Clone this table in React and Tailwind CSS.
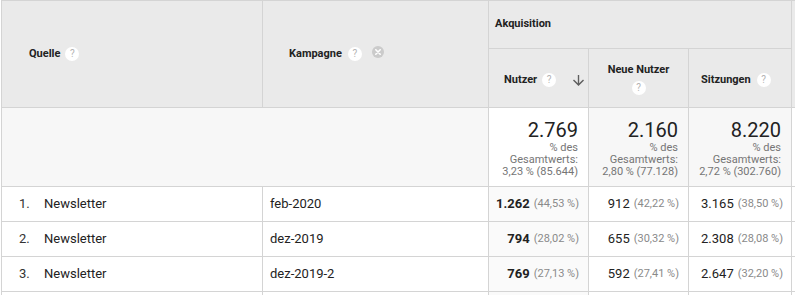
import React from "react";

const Help = () => (
  <span className="inline-flex items-center justify-center w-[14px] h-[14px] rounded-full bg-white text-[10px] leading-none text-[#b3b3b3] font-normal shrink-0">
    ?
  </span>
);

const ClearIcon = () => (
  <svg width="12" height="12" viewBox="0 0 12 12" className="shrink-0">
    <circle cx="6" cy="6" r="6" fill="#cbcbcb" />
    <path d="M3.8 3.8 L8.2 8.2 M8.2 3.8 L3.8 8.2" stroke="#fff" strokeWidth="1.6" strokeLinecap="round" />
  </svg>
);

const SortArrow = () => (
  <svg width="11" height="11" viewBox="4 4 16 16" className="shrink-0">
    <path d="M20 12l-1.41-1.41L13 16.17V4h-2v12.17l-5.58-5.59L4 12l8 8 8-8z" fill="#5f5f5f" />
  </svg>
);

const totals = [
  { value: "2.769", share: "3,23 % (85.644)", sorted: true },
  { value: "2.160", share: "2,80 % (77.128)" },
  { value: "8.220", share: "2,72 % (302.760)" },
];

const rows = [
  { n: "1.", source: "Newsletter", campaign: "feb-2020", users: "1.262", usersP: "(44,53 %)", newUsers: "912", newP: "(42,22 %)", sessions: "3.165", sessP: "(38,50 %)" },
  { n: "2.", source: "Newsletter", campaign: "dez-2019", users: "794", usersP: "(28,02 %)", newUsers: "655", newP: "(30,32 %)", sessions: "2.308", sessP: "(28,08 %)" },
  { n: "3.", source: "Newsletter", campaign: "dez-2019-2", users: "769", usersP: "(27,13 %)", newUsers: "592", newP: "(27,41 %)", sessions: "2.647", sessP: "(32,20 %)" },
];

const cell = "border-r border-b border-[#d4d4d4]";

export default function App() {
  return (
    <div className="w-[795px] h-[295px] overflow-hidden bg-white pl-px" style={{ fontFamily: "Roboto, 'Liberation Sans', sans-serif" }}>
      <div className="grid grid-cols-[261px_226px_100px_100px_103px_1fr] grid-rows-[48px_59px_79px_35px_35px_35px_35px] border-l border-t border-[#d4d4d4] text-[#222]">
        {/* header */}
        <div className={`${cell} row-span-2 bg-[#eaeaea] flex items-center pl-[27px] gap-[5px] text-[11px] font-bold`}>
          Quelle <Help />
        </div>
        <div className={`${cell} row-span-2 bg-[#eaeaea] flex items-center pl-[26px] text-[11px] font-bold`}>
          <span>Kampagne</span>
          <span className="ml-[6px]"><Help /></span>
          <span className="ml-[10px] -mt-[5px] flex"><ClearIcon /></span>
        </div>
        <div className={`${cell} col-span-3 bg-[#eaeaea] flex items-center pl-[6px] text-[11px] font-bold`}>
          Akquisition
        </div>
        <div className="border-b border-[#d4d4d4] row-span-2 bg-[#eaeaea]" />
        <div className={`${cell} bg-[#eaeaea] flex items-center pl-[15px] pt-[5px] text-[11px] font-bold`}>
          <span>Nutzer</span>
          <span className="ml-[5px]"><Help /></span>
          <span className="ml-[17px] flex"><SortArrow /></span>
        </div>
        <div className={`${cell} bg-[#eaeaea] flex flex-col items-center justify-center pt-[1px] text-[11px] font-bold leading-[13px]`}>
          <span>Neue Nutzer</span>
          <span className="mt-[5px] flex"><Help /></span>
        </div>
        <div className={`${cell} bg-[#eaeaea] flex items-center pl-[12px] pt-[5px] text-[11px] font-bold`}>
          <span>Sitzungen</span>
          <span className="ml-[6px]"><Help /></span>
        </div>

        {/* totals */}
        <div className="col-span-2 border-b border-r border-[#d4d4d4] bg-[#f7f7f7]" />
        {totals.map((t) => (
          <div key={t.value} className={`${cell} ${t.sorted ? "bg-white" : "bg-[#f7f7f7]"} flex flex-col items-end text-right pr-[10px] pt-[10px]`}>
            <span className="text-[20px] leading-[24px] text-[#222]">{t.value}</span>
            <span className="text-[11px] leading-[12px] text-[#757575]">% des</span>
            <span className="text-[11px] leading-[12px] text-[#757575]">Gesamtwerts:</span>
            <span className="text-[11px] leading-[12px] text-[#757575] whitespace-nowrap">{t.share}</span>
          </div>
        ))}
        <div className="border-b border-[#d4d4d4] bg-white" />

        {/* data rows */}
        {rows.map((r) => (
          <React.Fragment key={r.n}>
            <div className={`${cell} flex items-center text-[13px]`}>
              <span className="w-[42px] pl-[17px] text-[#333]">{r.n}</span>
              <span>{r.source}</span>
            </div>
            <div className={`${cell} flex items-center pl-[7px] text-[13px]`}>{r.campaign}</div>
            <div className={`${cell} bg-[#fafafa] flex items-center justify-end pr-[9px] text-[13px] whitespace-nowrap`}>
              <span className="font-bold">{r.users}</span>
              <span className="ml-[4px] text-[11px] text-[#8a8a8a]">{r.usersP}</span>
            </div>
            <div className={`${cell} flex items-center justify-end pr-[9px] text-[13px] whitespace-nowrap`}>
              <span>{r.newUsers}</span>
              <span className="ml-[4px] text-[11px] text-[#8a8a8a]">{r.newP}</span>
            </div>
            <div className={`${cell} flex items-center justify-end pr-[8px] text-[13px] whitespace-nowrap`}>
              <span>{r.sessions}</span>
              <span className="ml-[4px] text-[11px] text-[#8a8a8a]">{r.sessP}</span>
            </div>
            <div className="border-b border-[#d4d4d4]" />
          </React.Fragment>
        ))}

        {/* next row, cut off */}
        <div className={cell} />
        <div className={cell} />
        <div className={`${cell} bg-[#fafafa]`} />
        <div className={cell} />
        <div className={cell} />
        <div className="border-b border-[#d4d4d4]" />
      </div>
    </div>
  );
}
